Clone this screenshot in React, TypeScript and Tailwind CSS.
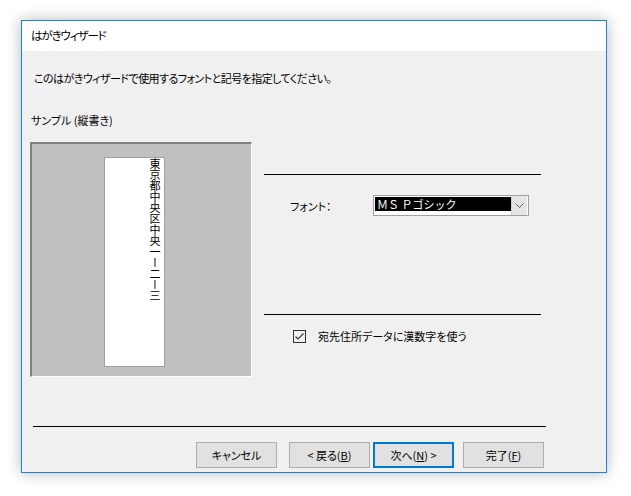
import React from 'react';

const font = "font-['Noto_Sans_CJK_JP','Noto_Sans',sans-serif] [font-feature-settings:'palt']";

function Button({ children, primary = false, className = '' }: { children: React.ReactNode; primary?: boolean; className?: string }) {
    return (
        <div
            className={`w-[81px] h-[26px] flex items-center justify-center bg-[#e1e1e1] text-[11px] text-black ${primary ? 'border-2 border-[#0078d7]' : 'border border-[#adadad]'} ${className}`}
        >
            {children}
        </div>
    );
}

export default function App() {
    return (
        <div className={`w-[631px] h-[496px] bg-white pt-[20px] pl-[21px] ${font}`}>
            <div className="w-[586px] h-[453px] border border-[#1883d7] bg-[#f0f0f0] flex flex-col shadow-[0_0_14px_rgba(0,0,0,0.28)]">
                {/* title bar */}
                <div className="h-[30px] bg-white flex items-center pl-[9px] text-[11.5px] tracking-[-1.1px] text-black leading-none">
                    はがきウィザード
                </div>

                {/* body */}
                <div className="flex-1 flex flex-col text-[11px] text-black">
                    <p className="mt-[19px] ml-[12px] h-[16px] leading-[16px] tracking-[-0.55px]">
                        このはがきウィザードで使用するフォントと記号を指定してください。
                    </p>
                    <p className="mt-[26px] ml-[9px] h-[16px] leading-[16px]">サンプル (縦書き)</p>

                    <div className="mt-[14px] flex">
                        {/* sample */}
                        <div className="ml-[8px] w-[222px] h-[235px] bg-[#c0c0c0] border-t-2 border-l-2 border-[#808080] border-r border-b border-r-white border-b-white pt-[13px] pl-[72px]">
                            <div className="w-[61px] h-[210px] bg-white border border-[#a0a0a0] flex justify-end pr-[3px]">
                                <div className="[writing-mode:vertical-rl] text-[11px] leading-[12px] [font-feature-settings:normal] font-['Noto_Sans_CJK_JP',sans-serif]">
                                    東京都中央区中央一ー二ー三
                                </div>
                            </div>
                        </div>

                        {/* options */}
                        <div className="ml-[12px] w-[277px] flex flex-col">
                            <div className="mt-[32px] h-px bg-black" />
                            <div className="mt-[20px] flex items-center">
                                <span className="ml-[26px] w-[83px] leading-[16px]">フォント：</span>
                                <div className="w-[156px] h-[21px] border border-[#a0a0a0] bg-white flex p-px">
                                    <div className="flex-1 h-[14px] bg-black text-white text-[11px] leading-[14px] pl-[2px] [font-feature-settings:normal]">
                                        ＭＳ Ｐゴシック
                                    </div>
                                    <div className="w-[16px] h-[19px] -mt-px bg-[#e5e5e5] border-l border-[#cfcfcf] flex items-center justify-center">
                                        <svg width="9" height="5" viewBox="0 0 9 5">
                                            <path d="M0.5 0.5 L4.5 4.5 L8.5 0.5" fill="none" stroke="#606060" strokeWidth="1" />
                                        </svg>
                                    </div>
                                </div>
                            </div>
                            <div className="mt-[98px] h-px bg-black" />
                            <div className="mt-[13px] flex items-center">
                                <div className="ml-[29px] w-[13px] h-[13px] border border-[#333333] bg-[#f0f0f0] flex items-center justify-center">
                                    <svg width="11" height="11" viewBox="0 0 11 11">
                                        <path d="M1.5 5.5 L4 8 L9.5 2.5" fill="none" stroke="#333333" strokeWidth="1.1" />
                                    </svg>
                                </div>
                                <span className="ml-[12px] leading-[16px]">宛先住所データに漢数字を使う</span>
                            </div>
                        </div>
                    </div>

                    <div className="mt-[49px] ml-[11px] w-[513px] h-px bg-black" />

                    <div className="mt-[15px] flex">
                        <Button className="ml-[174px]">キャンセル</Button>
                        <Button className="ml-[12px]">
                            &lt;&nbsp;戻る(<span className="underline">B</span>)
                        </Button>
                        <Button primary className="ml-[3px]">
                            次へ(<span className="underline">N</span>)&nbsp;&gt;
                        </Button>
                        <Button className="ml-[9px]">
                            完了(<span className="underline">F</span>)
                        </Button>
                    </div>
                </div>
            </div>
        </div>
    );
}
